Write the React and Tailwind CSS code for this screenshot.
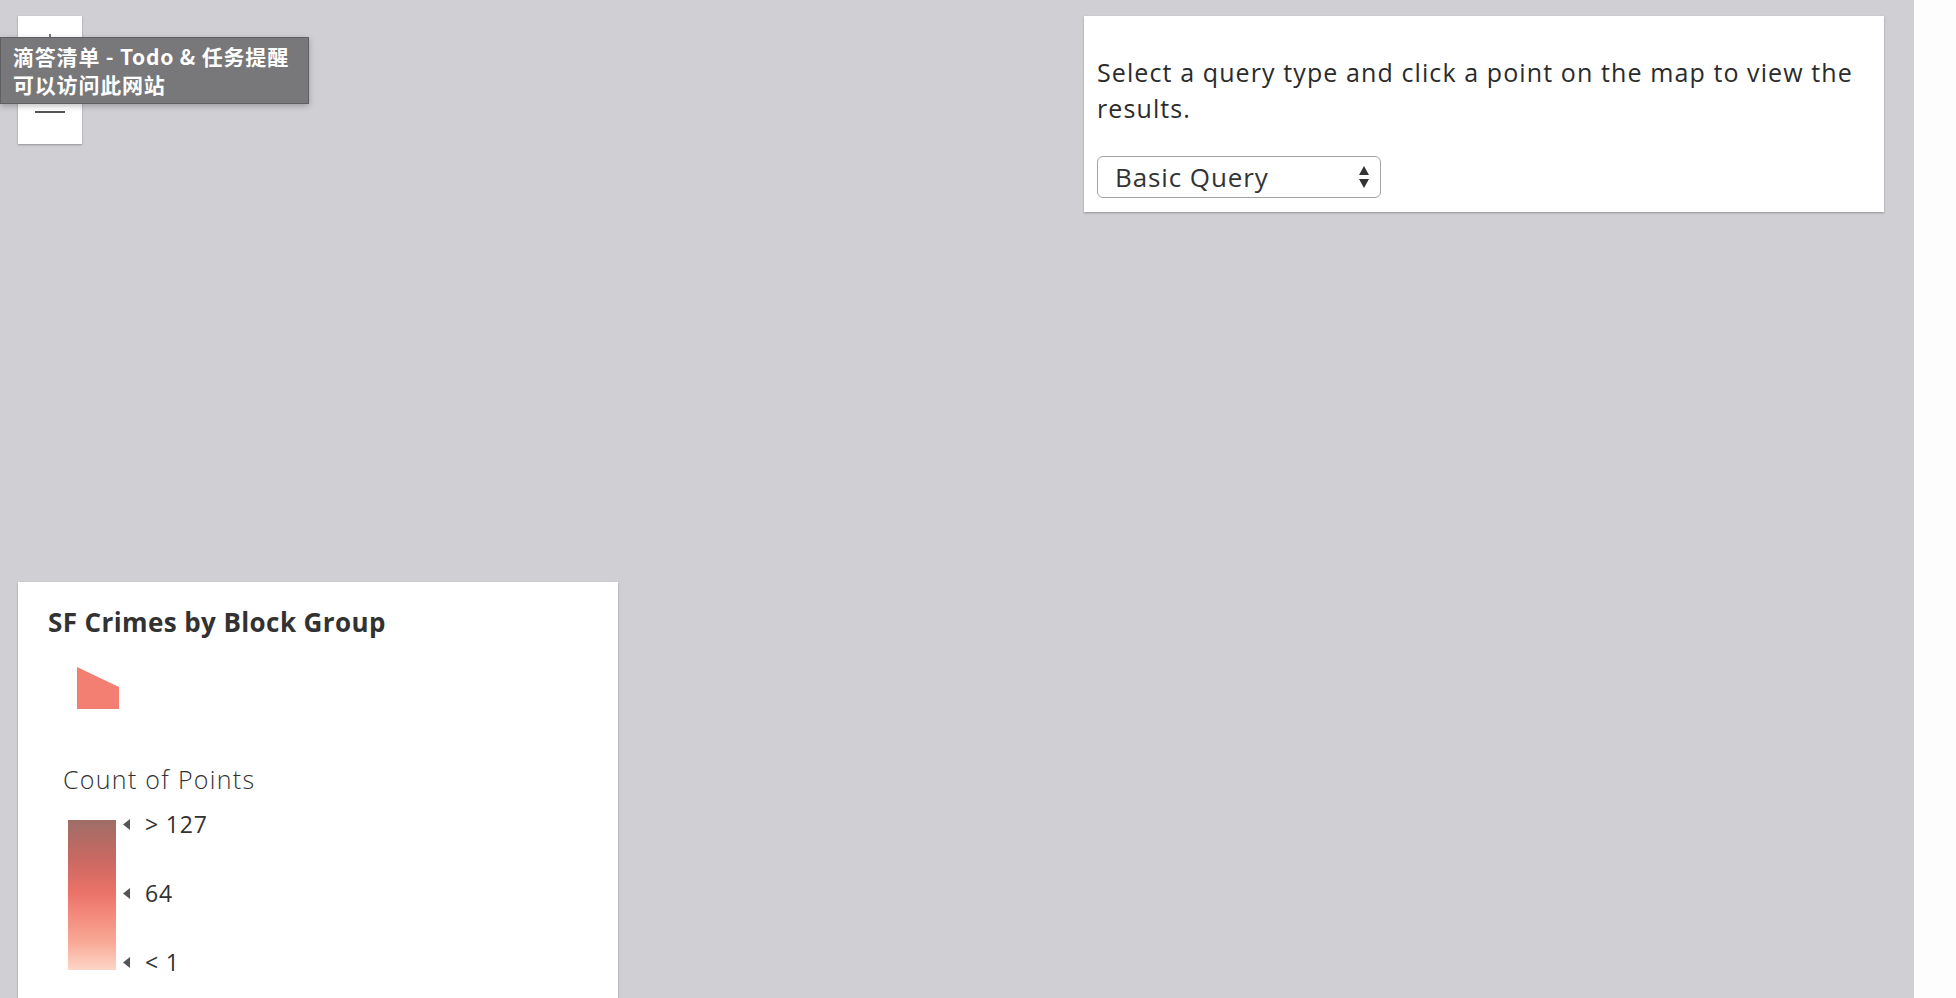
import React from "react";

const sans = { fontFamily: "'Open Sans', Lato, 'Liberation Sans', sans-serif" };

function ZoomWidget() {
  return (
    <div className="absolute left-[18px] top-[16px] w-[64px] h-[128px] bg-white shadow-[0_1px_2px_rgba(0,0,0,0.3)] flex flex-col">
      <button className="h-[64px] flex items-center justify-center border-b border-[#e4e4e4]">
        <svg width="32" height="32" viewBox="0 0 32 32">
          <path d="M16 2 V30 M2 16 H30" stroke="#555" strokeWidth="1.6" fill="none" />
        </svg>
      </button>
      <button className="h-[64px] flex items-center justify-center">
        <svg width="32" height="32" viewBox="0 0 32 32">
          <path d="M1 16 H31" stroke="#555" strokeWidth="2" fill="none" />
        </svg>
      </button>
    </div>
  );
}

function SiteTooltip() {
  return (
    <div
      className="absolute left-0 top-[37px] w-[309px] h-[67px] bg-[#78777a] border border-[#5f5e62] shadow-[0_2px_6px_rgba(0,0,0,0.25)] px-[12px] pt-[4px] text-white font-bold text-[21px] leading-[28px] tracking-[0.8px] whitespace-nowrap"
      style={{ fontFamily: "'Noto Sans CJK SC', 'Noto Sans', sans-serif" }}
    >
      <div>滴答清单 - Todo &amp; 任务提醒</div>
      <div>可以访问此网站</div>
    </div>
  );
}

function QueryPanel() {
  return (
    <div className="absolute left-[1084px] top-[16px] w-[800px] h-[196px] bg-white shadow-[0_1px_2px_rgba(0,0,0,0.3)] px-[13px] pt-[38px] text-[#2b2b2b]" style={sans}>
      <p className="text-[25px] leading-[36px] tracking-[1.1px]">
        Select a query type and click a point on the map to view the results.
      </p>
      <div className="mt-[30px] w-[284px] h-[42px] border border-[#a3a3a3] rounded-[6px] flex items-center justify-between pl-[17px] pr-[10px]">
        <span className="text-[26px] leading-none text-[#333] tracking-[0.9px]">Basic Query</span>
        <svg width="12" height="24" viewBox="0 0 12 24">
          <path d="M6 1 L11 10 H1 Z M6 23 L11 14 H1 Z" fill="#333" />
        </svg>
      </div>
    </div>
  );
}

function Legend() {
  const stops = ["> 127", "64", "< 1"];
  return (
    <div className="absolute left-[18px] top-[582px] w-[600px] h-[440px] bg-white shadow-[0_1px_2px_rgba(0,0,0,0.3)] text-[#323232]" style={sans}>
      <h3 className="ml-[30px] mt-[24px] text-[26px] leading-[32px] font-bold text-[#323232] tracking-[0.4px]">SF Crimes by Block Group</h3>
      <svg className="ml-[59px] mt-[29px]" width="42" height="42" viewBox="0 0 42 42">
        <polygon points="0,0 42,20 42,42 0,42" fill="#f37f73" />
      </svg>
      <div className="ml-[45px] mt-[55px] text-[25px] leading-[30px] font-light tracking-[1.3px]">Count of Points</div>
      <div className="ml-[50px] mt-[16px] flex items-start">
        <div className="mt-[10px] w-[48px] h-[150px] bg-[linear-gradient(to_bottom,#9e6e68_0%,#c86862_25%,#ea7268_48%,#f3887a_62%,#f9aa97_82%,#fdd6c8_100%)]" />
        <div className="ml-[7px] h-[166px] flex flex-col justify-between">
          {stops.map((s) => (
            <div key={s} className="flex items-center h-[28px]">
              <svg width="7" height="11" viewBox="0 0 7 11">
                <path d="M7 0 L0 5.5 L7 11 Z" fill="#555" />
              </svg>
              <span className="ml-[15px] text-[23px] leading-[28px] tracking-[0.8px]">{s}</span>
            </div>
          ))}
        </div>
      </div>
    </div>
  );
}

export default function App() {
  return (
    <div className="w-full h-screen flex overflow-hidden">
      <div className="relative w-[1914px] h-full bg-[#d0cfd4] overflow-hidden">
        <ZoomWidget />
        <QueryPanel />
        <Legend />
        <SiteTooltip />
      </div>
      <div className="flex-1 h-full bg-[#fdfdfd]" />
    </div>
  );
}
